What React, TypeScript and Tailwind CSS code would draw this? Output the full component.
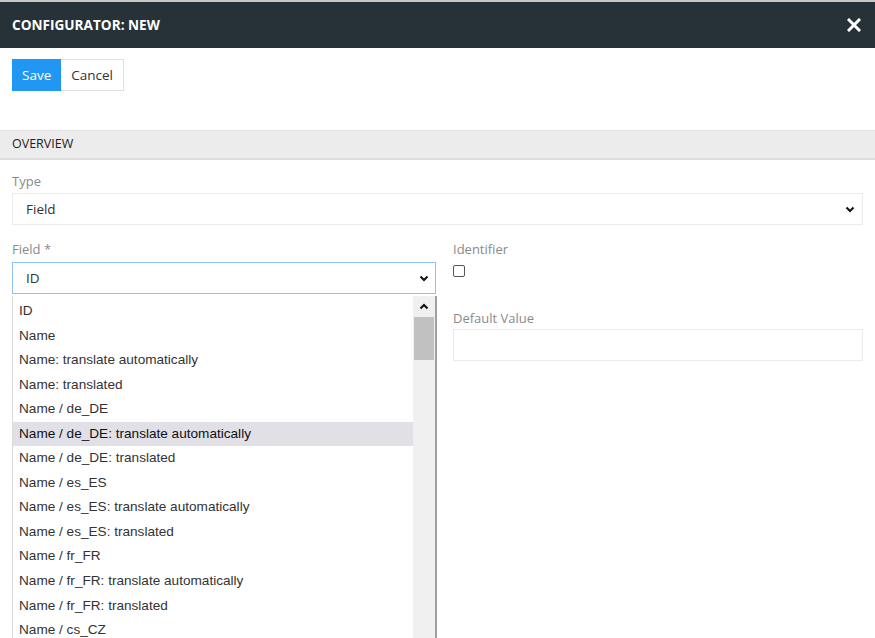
import React from 'react';

const OPTIONS = [
  'ID',
  'Name',
  'Name: translate automatically',
  'Name: translated',
  'Name / de_DE',
  'Name / de_DE: translate automatically',
  'Name / de_DE: translated',
  'Name / es_ES',
  'Name / es_ES: translate automatically',
  'Name / es_ES: translated',
  'Name / fr_FR',
  'Name / fr_FR: translate automatically',
  'Name / fr_FR: translated',
  'Name / cs_CZ',
];

const Chevron = ({ up = false }: { up?: boolean }) => (
  <svg width="10" height="7" viewBox="0 0 10 7" className={up ? 'rotate-180' : ''}>
    <path d="M1.5 1.5 L5 5 L8.5 1.5" fill="none" stroke="#111" strokeWidth="2" />
  </svg>
);

export default function App() {
  return (
    <div className="w-[875px] h-[638px] overflow-hidden bg-white font-['Open_Sans',sans-serif] text-[13px]">
      <div className="h-[2px] bg-[#c8c8c8]" />
      <div className="h-[46px] bg-[#263238] flex items-center justify-between pl-3 pr-[14px]">
        <span className="text-white font-bold text-[13.6px]">CONFIGURATOR: NEW</span>
        <svg width="14" height="14" viewBox="0 0 14 14">
          <path d="M2 2 L12 12 M12 2 L2 12" stroke="#fff" strokeWidth="3" strokeLinecap="square" />
        </svg>
      </div>

      <div className="flex pl-3 pt-[11px] h-[82px]">
        <button className="h-[32px] px-[10px] bg-[#2196f3] text-white text-[13.5px]">Save</button>
        <button className="h-[32px] px-[10px] bg-white text-[#333] text-[13.5px] border border-[#e0e0e0] border-l-0">
          Cancel
        </button>
      </div>

      <div className="h-[30px] bg-[#ececec] border-t border-[#e2e2e2] border-b-2 border-b-[#dedede] flex items-center pl-3 text-[#222] text-[12.5px]">
        OVERVIEW
      </div>

      <div className="px-3 pt-[12px]">
        <div className="text-[#8a8a8a] text-[13px] leading-[18px]">Type</div>
        <div className="mt-[3px] h-[32px] border border-[#ebebeb] flex items-center justify-between pl-[13px] pr-[7px] text-[#333] text-[13.5px]">
          <span>Field</span>
          <Chevron />
        </div>

        <div className="flex gap-[17px] mt-[15px]">
          <div className="w-[424px] relative">
            <div className="text-[#8a8a8a] text-[13px] leading-[18px]">Field *</div>
            <div className="mt-[4px] h-[32px] border border-[#8cc4f5] flex items-center justify-between pl-[13px] pr-[6px] text-[#333] text-[13.5px]">
              <span>ID</span>
              <Chevron />
            </div>
            <div className="absolute left-0 top-[56px] w-[425px] h-[400px] bg-white border-l border-[#dcdcdc] flex font-['Liberation_Sans',Arial,sans-serif] text-[13.6px] text-[#333]">
              <div className="flex-1 pt-[3px]">
                {OPTIONS.map((o, i) => (
                  <div
                    key={o}
                    className={`h-[24.55px] leading-[24.55px] pl-[6px] ${i === 5 ? 'bg-[#e1e0e6] text-[#111]' : ''}`}
                  >
                    {o}
                  </div>
                ))}
              </div>
              <div className="w-[22px] bg-[#f0f0f0] flex flex-col">
                <div className="h-[21px] flex items-center justify-center">
                  <Chevron up />
                </div>
                <div className="h-[43px] mx-[1px] bg-[#c1c1c1]" />
              </div>
              <div className="w-[2px] bg-[#a0a0a0]" />
            </div>
          </div>

          <div className="flex-1">
            <div className="text-[#8a8a8a] text-[13px] leading-[18px]">Identifier</div>
            <div className="mt-[7px] w-[12px] h-[12px] border border-[#555] rounded-[2px]" />
            <div className="text-[#8a8a8a] text-[13px] leading-[18px] mt-[32px]">Default Value</div>
            <div className="mt-[2px] h-[32px] border border-[#ebebeb]" />
          </div>
        </div>
      </div>
    </div>
  );
}
